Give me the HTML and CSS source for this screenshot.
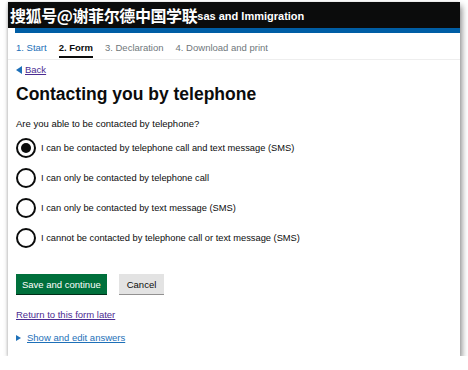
FILE: index.html
```html
<!DOCTYPE html>
<html lang="en">
  <head>
    <meta charset="UTF-8" />
    <title>Contacting you by telephone</title>
    <link rel="stylesheet" href="styles.css">
  </head>
  <body>
    <div class="page">
      <div class="masthead">
        <span class="mark">搜狐号@谢菲尔德中国学联</span><span class="service">sas and Immigration</span>
      </div>
      <div class="blue-bar"></div>

      <nav class="steps">
        <a class="step done">1. Start</a>
        <span class="step current">2. Form</span>
        <span class="step">3. Declaration</span>
        <span class="step">4. Download and print</span>
      </nav>

      <main class="content">
        <a class="back" href="#"><span class="tri-left"></span>Back</a>

        <h1>Contacting you by telephone</h1>

        <form>
          <p class="question">Are you able to be contacted by telephone?</p>
          <div class="radios">
            <label class="radio"><span class="circle checked"></span>I can be contacted by telephone call and text message (SMS)</label>
            <label class="radio"><span class="circle"></span>I can only be contacted by telephone call</label>
            <label class="radio"><span class="circle"></span>I can only be contacted by text message (SMS)</label>
            <label class="radio"><span class="circle"></span>I cannot be contacted by telephone call or text message (SMS)</label>
          </div>

          <div class="buttons">
            <button type="button" class="btn primary">Save and continue</button>
            <button type="button" class="btn secondary">Cancel</button>
          </div>
        </form>

        <a class="later" href="#">Return to this form later</a>
        <div class="details"><span class="tri-right"></span><a href="#">Show and edit answers</a></div>
      </main>
    </div>
  </body>
</html>
```

FILE: styles.css
```css
* {
  margin: 0;
  padding: 0;
  box-sizing: border-box;
}
body {
  background: #fff;
  font-family: 'Liberation Sans', Arial, sans-serif;
  color: #0b0c0c;
}

.page {
  width: 452px;
  height: 354px;
  margin: 2px 0 0 8px;
  background: #fff;
  box-shadow: 2px 4px 6px rgba(0, 0, 0, 0.45), -1px 0 2px rgba(0, 0, 0, 0.12);
}

.masthead {
  height: 26px;
  background: #0b0c0c;
  color: #fff;
  display: flex;
  align-items: center;
  padding-left: 2px;
  font-weight: bold;
  white-space: nowrap;
}
.mark {
  font-family: 'Noto Sans CJK SC', sans-serif;
  font-size: 16px;
  letter-spacing: -0.4px;
}
.service {
  font-size: 11px;
  padding-top: 2px;
}
.blue-bar {
  height: 5px;
  margin-left: 7px;
  background: #005ea5;
}

.steps {
  display: flex;
  gap: 12px;
  height: 27px;
  padding: 9px 0 0 8px;
  border-bottom: 1px solid #eeeeee;
  font-size: 9.5px;
}
.step {
  color: #6f777b;
  height: 16px;
}
.step.done {
  color: #1d70b8;
}
.step.current {
  color: #0b0c0c;
  font-weight: bold;
  border-bottom: 2px solid #0b0c0c;
}

.content {
  padding: 4px 8px 0 8px;
  font-size: 9.5px;
}
a {
  color: #1d70b8;
}
.back {
  display: flex;
  width: fit-content;
  align-items: center;
  gap: 3px;
  line-height: 12px;
  color: #4c2c92;
}
.tri-left {
  width: 0;
  height: 0;
  border-top: 4px solid transparent;
  border-bottom: 4px solid transparent;
  border-right: 6px solid #1d70b8;
}

h1 {
  font-size: 17.5px;
  line-height: 20px;
  font-weight: bold;
  margin: 8px 0 14px;
}
.question {
  line-height: 11px;
  margin-bottom: 9px;
}
.radios {
  display: flex;
  flex-direction: column;
  gap: 10px;
}
.radio {
  display: flex;
  align-items: center;
  gap: 5px;
  font-size: 9.3px;
  height: 20px;
}
.circle {
  width: 20px;
  height: 20px;
  border: 2px solid #0b0c0c;
  border-radius: 50%;
  flex: none;
  position: relative;
}
.circle.checked::after {
  content: '';
  position: absolute;
  left: 3px;
  top: 3px;
  width: 10px;
  height: 10px;
  border-radius: 50%;
  background: #0b0c0c;
}

.buttons {
  display: flex;
  gap: 12px;
  margin-top: 26px;
}
.btn {
  height: 20px;
  padding: 0 6px;
  border: none;
  font-family: inherit;
  font-size: 9.5px;
}
.btn.primary {
  background: #00703c;
  color: #fff;
  box-shadow: 0 1px 0 #002d18;
}
.btn.secondary {
  padding: 0 8px;
  background: #e3e3e3;
  color: #0b0c0c;
  box-shadow: 0 1px 0 #929191;
}

.later {
  display: block;
  width: fit-content;
  margin-top: 15px;
  line-height: 11px;
  color: #4c2c92;
}
.details {
  display: flex;
  align-items: center;
  gap: 6px;
  margin-top: 12px;
  line-height: 11px;
}
.tri-right {
  width: 0;
  height: 0;
  border-top: 3.5px solid transparent;
  border-bottom: 3.5px solid transparent;
  border-left: 5px solid #1d70b8;
}
```
